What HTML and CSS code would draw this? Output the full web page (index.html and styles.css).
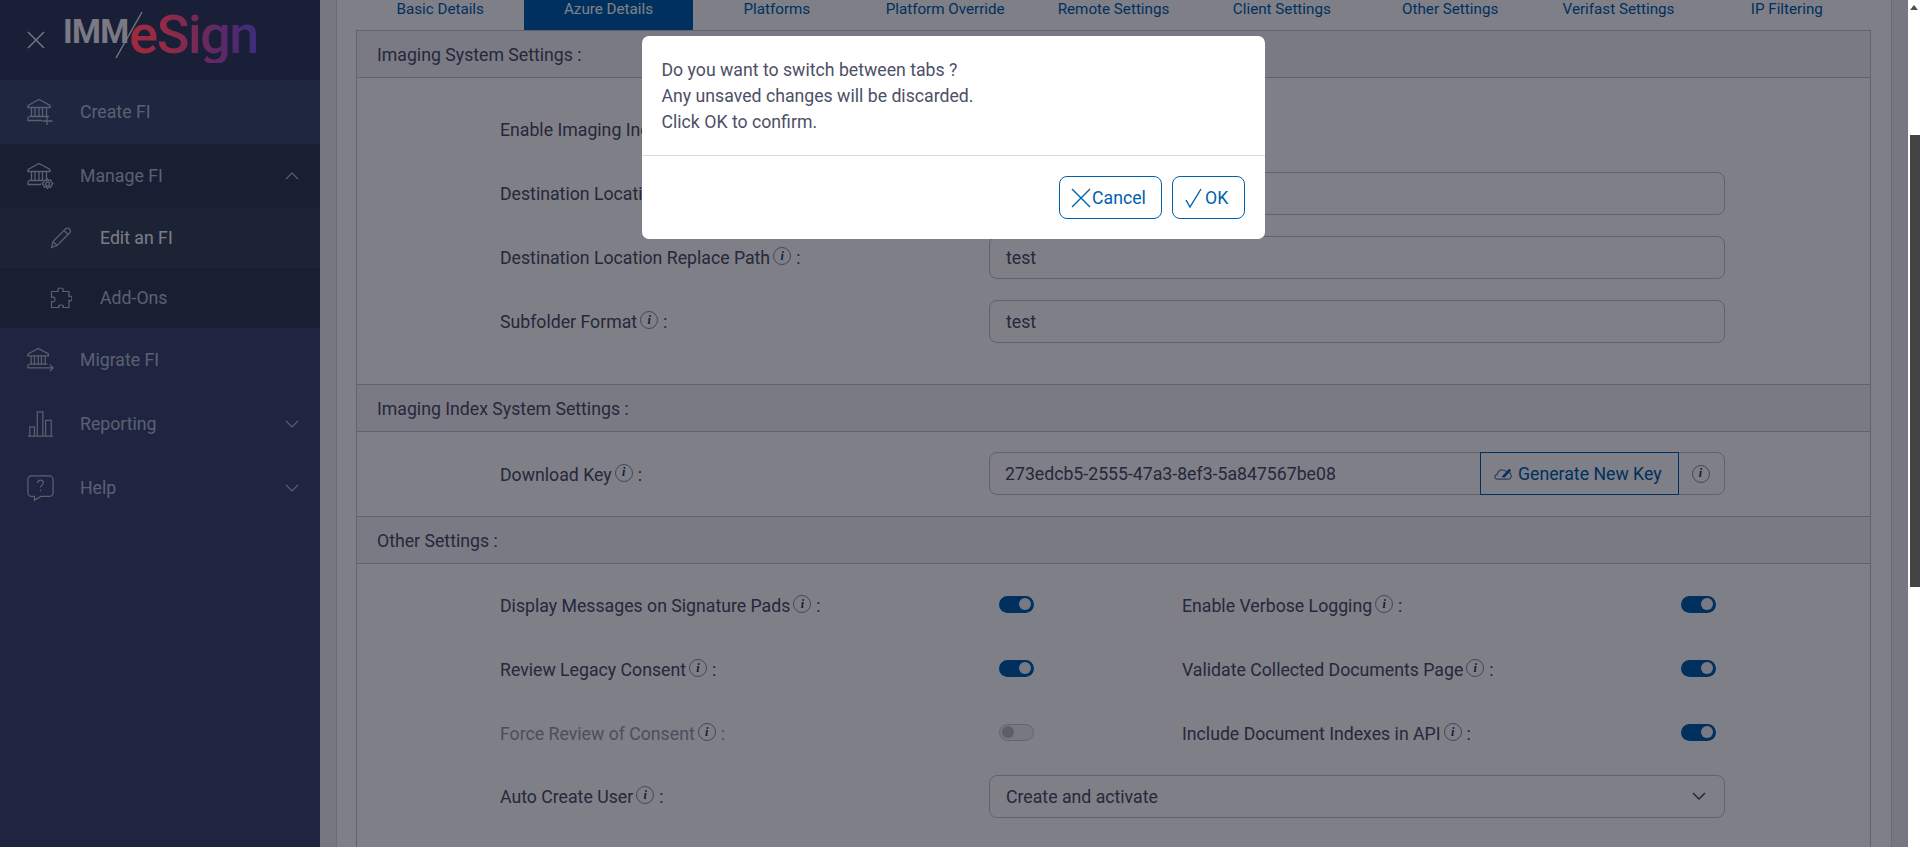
FILE: index.html
```html
<!DOCTYPE html>
<html lang="en">
<head>
<meta charset="utf-8">
<title>IMM eSign</title>
<link rel="stylesheet" href="styles.css">
</head>
<body>
<div class="app">
  <div class="shell">
    <aside class="sidebar">
      <div class="brand">
        <svg class="close-icon" viewBox="0 0 18 18"><path d="M1 1l16 16M17 1L1 17"/></svg>
        <div class="logo">
          <span class="logo-imm">IMM</span>
          <svg class="logo-slash" viewBox="0 0 30 48"><path d="M28 1L2 47"/></svg>
          <span class="logo-esign">eSign</span>
        </div>
      </div>
      <nav>
        <a class="nav-item nav-create">
          <svg class="nav-icon" viewBox="0 0 27 28"><path d="M1 7.500L12 1.500l11 6v2H1zM4.500 9.500v9M8 9.500v9M12 9.500v9M15.500 9.500v9M19.500 9.500v9M2 18.500h20M1 18.500v4h14M20 18v9M15.500 23h10"/></svg>
          <span>Create FI</span>
        </a>
        <a class="nav-item nav-open">
          <svg class="nav-icon" viewBox="0 0 27 28"><path d="M1 7.500L12 1.500l11 6v2H1zM4.500 9.500v9M8 9.500v9M12 9.500v9M15.500 9.500v9M19.500 9.500v9M2 18.500h14M1 18.500v4h13"/><circle cx="20.500" cy="22" r="2"/><path d="M20.500 17l1.200 1.500 2-.3.7 2 1.500 1.500-1.500 1.500-.7 2-2-.3-1.200 1.500-1.200-1.500-2 .3-.7-2-1.500-1.500 1.500-1.500.7-2 2 .3z"/></svg>
          <span>Manage FI</span>
          <svg class="chev" viewBox="0 0 14 8"><path d="M1 7l6-6 6 6"/></svg>
        </a>
        <a class="sub-item sub-active">
          <svg class="sub-icon" viewBox="0 0 22 22"><path d="M1.500 20.500l1.500-6L15.500 2c1.200-1.200 3-1.200 4 0s1.200 2.800 0 4L7 18.500zM3 14.500l4 4M14 3.500l4.500 4.500"/></svg>
          <span>Edit an FI</span>
        </a>
        <a class="sub-item">
          <svg class="sub-icon" viewBox="0 0 22 22"><path d="M8 4.500C7 2 8.500 1 10.500 1S14 2 13 4.500h6v5c2-1 3 .5 3 2s-1 3-3 2v7h-6c1-2 0-2.500-2-2.500s-3 .5-2 2.500H1.500v-6c2 1 3.500 0 3.500-2s-1.500-3-3.500-2v-6z"/></svg>
          <span>Add-Ons</span>
        </a>
        <a class="nav-item">
          <svg class="nav-icon" viewBox="0 0 29 28"><path d="M1 7.500L12 1.500l11 6v2H1zM4.500 9.500v9M8 9.500v9M12 9.500v9M15.500 9.500v9M19.500 9.500v9M2 18.500h20M1 18.500v4h27M24.500 19l3.500 3.500-3.500 3.500"/></svg>
          <span>Migrate FI</span>
        </a>
        <a class="nav-item">
          <svg class="nav-icon" viewBox="0 0 29 28"><path d="M1 27h27M3 27V17h5v10M11 27V1h6v26M20 27V10h6v17"/></svg>
          <span>Reporting</span>
          <svg class="chev" viewBox="0 0 14 8"><path d="M1 1l6 6 6-6"/></svg>
        </a>
        <a class="nav-item">
          <svg class="nav-icon" viewBox="0 0 29 28"><path d="M5 1h19c2.200 0 4 1.800 4 4v14c0 2.200-1.800 4-4 4H15l-7 4v-4H5c-2.200 0-4-1.800-4-4V5c0-2.200 1.800-4 4-4z"/><path d="M11.500 8.500c0-4 6-4 6-.2 0 2.700-3 2.500-3 5.200M14.500 16v1.500"/></svg>
          <span>Help</span>
          <svg class="chev" viewBox="0 0 14 8"><path d="M1 1l6 6 6-6"/></svg>
        </a>
      </nav>
    </aside>

    <main class="main">
      <div class="card">
        <div class="tabs">
          <a class="tab">Basic Details</a>
          <a class="tab tab-active">Azure Details</a>
          <a class="tab">Platforms</a>
          <a class="tab">Platform Override</a>
          <a class="tab">Remote Settings</a>
          <a class="tab">Client Settings</a>
          <a class="tab">Other Settings</a>
          <a class="tab">Verifast Settings</a>
          <a class="tab">IP Filtering</a>
        </div>
        <div class="panel">
          <h2 class="section-head">Imaging System Settings :</h2>
          <div class="section-body body-imaging">
            <div class="row">
              <label class="label">Enable Imaging Index<i class="info">i</i><span class="colon">:</span></label>
              <span class="switch switch-pad"></span>
            </div>
            <div class="row">
              <label class="label">Destination Location Path<i class="info">i</i><span class="colon">:</span></label>
              <div class="input">test</div>
            </div>
            <div class="row">
              <label class="label">Destination Location Replace Path<i class="info">i</i><span class="colon">:</span></label>
              <div class="input">test</div>
            </div>
            <div class="row">
              <label class="label">Subfolder Format<i class="info">i</i><span class="colon">:</span></label>
              <div class="input">test</div>
            </div>
          </div>

          <h2 class="section-head">Imaging Index System Settings :</h2>
          <div class="section-body body-index">
            <div class="row row-key">
              <label class="label">Download Key<i class="info">i</i><span class="colon">:</span></label>
              <div class="input-group">
                <div class="group-value">273edcb5-2555-47a3-8ef3-5a847567be08</div>
                <button class="generate">
                  <svg class="gen-icon" viewBox="0 0 20 14"><path d="M3.500 12.500C1.500 12.500 1 11 1 10s.8-2.200 2.300-2.400C4 4.500 6.500 2.500 9.500 2.800c1.500 0 2.500.7 3.500 1.700 2.500 0 4.500 1.500 5 3.500.5 2.500-1 4.500-3 4.500z"/><path class="gen-solid" d="M8 10l8-8.500 2 1.500-7 8z"/></svg>
                  Generate New Key
                </button>
                <div class="group-info"><i class="info">i</i></div>
              </div>
            </div>
          </div>

          <h2 class="section-head">Other Settings :</h2>
          <div class="section-body body-other">
            <div class="row-pair">
              <div class="pair-cell">
                <label class="label">Display Messages on Signature Pads<i class="info">i</i><span class="colon">:</span></label>
                <span class="switch switch-pad switch-on"></span>
              </div>
              <div class="pair-cell">
                <label class="label">Enable Verbose Logging<i class="info">i</i><span class="colon">:</span></label>
                <span class="switch switch-pad switch-on"></span>
              </div>
            </div>
            <div class="row-pair">
              <div class="pair-cell">
                <label class="label">Review Legacy Consent<i class="info">i</i><span class="colon">:</span></label>
                <span class="switch switch-pad switch-on"></span>
              </div>
              <div class="pair-cell">
                <label class="label">Validate Collected Documents Page<i class="info">i</i><span class="colon">:</span></label>
                <span class="switch switch-pad switch-on"></span>
              </div>
            </div>
            <div class="row-pair">
              <div class="pair-cell">
                <label class="label label-muted">Force Review of Consent<i class="info">i</i><span class="colon">:</span></label>
                <span class="switch switch-pad switch-off"></span>
              </div>
              <div class="pair-cell">
                <label class="label">Include Document Indexes in API<i class="info">i</i><span class="colon">:</span></label>
                <span class="switch switch-pad switch-on"></span>
              </div>
            </div>
            <div class="row">
              <label class="label">Auto Create User<i class="info">i</i><span class="colon">:</span></label>
              <div class="input select">Create and activate
                <svg class="select-chev" viewBox="0 0 14 8"><path d="M1 1l6 6 6-6"/></svg>
              </div>
            </div>
          </div>
        </div>
      </div>
    </main>
    <div class="backdrop"></div>
    <div class="modal" role="dialog">
      <div class="modal-body">
        <p>Do you want to switch between tabs ?</p>
        <p>Any unsaved changes will be discarded.</p>
        <p>Click OK to confirm.</p>
      </div>
      <div class="modal-footer">
        <button class="btn btn-cancel">
          <svg class="btn-icon" viewBox="0 0 20 20"><path d="M1 1l18 18M19 1L1 19"/></svg>Cancel
        </button>
        <button class="btn btn-ok">
          <svg class="btn-icon" viewBox="0 0 18 20"><path d="M1 12l4 7L16 1"/></svg>OK
        </button>
      </div>
    </div>
  </div>
  <div class="scrollbar">
    <svg class="scroll-up" viewBox="0 0 8 5"><path d="M4 0l4 5H0z"/></svg>
    <div class="scroll-thumb"></div>
  </div>
</div>
</body>
</html>
```

FILE: styles.css
```css
* { box-sizing: border-box; }
html, body { margin: 0; padding: 0; height: 847px; overflow: hidden; }
body { font-family: Roboto, "Liberation Sans", sans-serif; font-size: 17.700px; color: #4c5066; background: #fff; }
a { color: inherit; text-decoration: none; }

.app { display: flex; width: 1920px; height: 847px; }
.shell { position: relative; display: flex; width: 1908px; height: 847px; overflow: hidden; }

/* sidebar */
.sidebar { width: 320px; flex: none; background: #3e4a70; color: #b6c0d0; }
.brand { display: flex; align-items: center; height: 80px; background: #303e5e; padding-left: 27px; }
.close-icon { width: 18px; height: 18px; flex: none; fill: none; stroke: #f2f2f2; stroke-width: 1.4; }
.logo { position: relative; display: flex; align-items: flex-start; height: 80px; margin-left: 18px; }
.logo-imm { font-weight: 700; font-size: 33px; line-height: 33px; letter-spacing: -.7px; color: #f4f4f8; margin-top: 15px; }
.logo-slash { position: absolute; left: 51px; top: 11px; width: 30px; height: 48px; fill: none; stroke: #f0f0f4; stroke-width: 1.4; }
.logo-esign { position: relative; z-index: 2; font-weight: 500; font-size: 54px; line-height: 56px; letter-spacing: -1.500px; margin: 7px 0 0 1px; background: linear-gradient(90deg, #a02a3c 0%, #962a44 25%, #7d2a50 45%, #68285f 62%, #55286e 78%, #3c2d7d 100%); -webkit-background-clip: text; background-clip: text; color: transparent; }

.nav-item { display: flex; align-items: center; height: 64px; padding: 0 21px 0 27px; }
.nav-item span { flex: 1; }
.nav-create { background: #3e4c70; }
.nav-open { background: #303e56; }
.sub-item { display: flex; align-items: center; height: 60px; padding-left: 50px; background: #303e56; }
.sub-active { background: #384658; color: #f4fafe; }
.nav-icon { width: 27px; height: 28px; margin-right: 26px; flex: none; fill: none; stroke: #b6c0d0; stroke-width: 1.3; }
.sub-icon { width: 22px; height: 22px; margin-right: 28px; flex: none; fill: none; stroke: #b6c0d0; stroke-width: 1.2; }
.chev { width: 14px; height: 8px; flex: none; fill: none; stroke: #b6c0d0; stroke-width: 1.1; }

/* main */
.main { flex: 1; background: #eeeef2; padding: 0 16px; min-width: 0; }
.card { display: flex; flex-direction: column; background: #fefefe; height: 847px; padding: 0 20px 0 19px; border-left: 1px solid #d8d8de; border-right: 1px solid #d8d8de; }
.tabs { display: grid; grid-template-columns: repeat(9, 1fr); height: 30px; flex: none; }
.tab { display: flex; align-items: flex-start; justify-content: center; color: #0062ad; font-size: 15.200px; line-height: 18px; }
.tab-active { background: #0062ad; color: #fff; }
.panel { flex: 1; border: 1px solid #c4c4cc; border-bottom: 0; }
.section-head { margin: 0; height: 47px; display: flex; align-items: center; padding: 1px 0 0 20px; background: #f5f5f8; border-bottom: 1px solid #c4c4cc; font-size: 17.700px; font-weight: 400; color: #4c5066; }
.section-body { padding-left: 143px; border-bottom: 1px solid #c4c4cc; }
.body-imaging { padding-top: 19px; padding-bottom: 31px; }
.body-index { padding-top: 20px; padding-bottom: 21px; }
.body-other { padding-top: 8px; border-bottom: 0; }

.row { display: grid; grid-template-columns: 489px 736px; align-items: center; height: 64px; }
.row-key { height: 43px; }
.row-pair { display: grid; grid-template-columns: 682px 1fr; height: 64px; }
.pair-cell { display: flex; align-items: center; }
.pair-cell .label { width: 488px; flex: none; padding-top: 4px; }

.label { display: flex; align-items: center; padding-top: 2px; }
.label-muted { color: #9a9caa; }
.info { display: inline-flex; align-items: center; justify-content: center; width: 18px; height: 18px; margin-left: 3px; border: 1px solid #8c90a4; border-radius: 50%; font-family: "Liberation Serif", serif; font-style: italic; font-weight: 700; font-size: 12px; color: #1a3f6a; flex: none; position: relative; top: -2px; }
.colon { margin-left: 5px; }

.input { height: 43px; display: flex; align-items: center; padding: 2px 16px 0; border: 1px solid #c4c4cc; border-radius: 8px; background: #fefefe; }
.select { justify-content: space-between; padding-right: 18px; }
.select-chev { width: 14px; height: 8px; margin-top: -2px; fill: none; stroke: #4c5066; stroke-width: 1.5; }

.switch { display: inline-block; width: 35px; height: 17px; border-radius: 9px; position: relative; background: #0062ad; flex: none; }
.switch::after { content: ""; position: absolute; width: 12px; height: 12px; top: 2.500px; right: 3px; border-radius: 50%; background: #f2f2f8; }
.switch-pad { margin-left: 11px; }
.switch-off { background: #f0f0f4; border: 1px solid #c8c8d0; }
.switch-off::after { right: auto; left: 2px; top: 1.500px; background: #bcbcc6; }

.input-group { display: flex; height: 43px; border: 1px solid #c4c4cc; border-radius: 8px; align-items: stretch; }
.group-value { width: 490px; display: flex; align-items: center; padding-left: 15px; }
.generate { display: flex; align-items: center; width: 199px; margin: -1px 0; border: 1px solid #0062ad; background: #fefefe; color: #0062ad; font: inherit; padding: 0 0 0 13px; }
.gen-icon { width: 19px; height: 14px; margin-right: 5px; fill: none; stroke: #6a7d9e; stroke-width: 1.3; }
.gen-solid { fill: #0062ad; stroke: none; }
.group-info { flex: 1; display: flex; align-items: center; justify-content: center; padding-right: 2px; }
.group-info .info { margin: 0; top: 0; }

/* overlay */
.backdrop { position: absolute; inset: 0; z-index: 1; background: rgba(0, 0, 16, .5); }
.modal { position: absolute; z-index: 3; left: 642px; top: 36px; width: 623px; height: 203px; background: #fff; border-radius: 7px; }
.modal-body { height: 120px; padding: 21px 20px 0 19.500px; border-bottom: 1px solid #dcdcdc; }
.modal-body p { margin: 0; line-height: 26px; }
.modal-footer { display: flex; justify-content: flex-end; gap: 10px; padding: 20px 20px 0 0; }
.btn { display: flex; align-items: center; height: 43px; padding: 0; background: #fff; border: 1px solid #0062ad; border-radius: 8px; color: #0062ad; font: inherit; }
.btn-cancel { width: 103px; padding-left: 11px; }
.btn-ok { width: 73px; padding-left: 12px; }
.btn-icon { width: 20px; height: 20px; margin-right: 1px; fill: none; stroke: #0062ad; stroke-width: 1.4; }
.btn-ok .btn-icon { width: 18px; margin-right: 2px; }

/* scrollbar */
.scrollbar { flex: 1; display: flex; flex-direction: column; align-items: flex-end; background: #fff; }
.scroll-up { width: 8px; height: 5px; margin: 5px 2px 0 0; fill: #505050; }
.scroll-thumb { width: 10px; height: 452px; margin-top: 125px; background: #444; }
```
